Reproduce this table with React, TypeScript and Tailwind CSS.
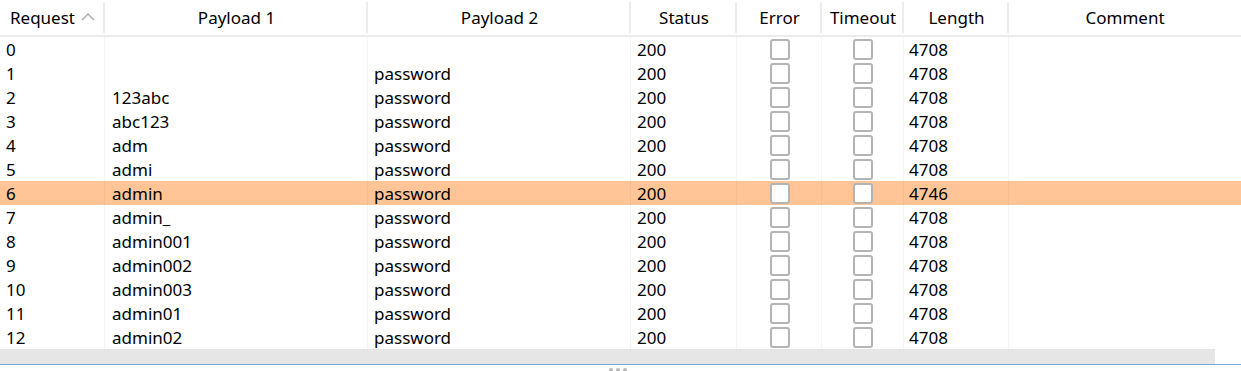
import React from "react";

type Row = { id: number; p1: string; p2: string; status: number; length: number };

const rows: Row[] = [
  { id: 0, p1: "", p2: "", status: 200, length: 4708 },
  { id: 1, p1: "", p2: "password", status: 200, length: 4708 },
  { id: 2, p1: "123abc", p2: "password", status: 200, length: 4708 },
  { id: 3, p1: "abc123", p2: "password", status: 200, length: 4708 },
  { id: 4, p1: "adm", p2: "password", status: 200, length: 4708 },
  { id: 5, p1: "admi", p2: "password", status: 200, length: 4708 },
  { id: 6, p1: "admin", p2: "password", status: 200, length: 4746 },
  { id: 7, p1: "admin_", p2: "password", status: 200, length: 4708 },
  { id: 8, p1: "admin001", p2: "password", status: 200, length: 4708 },
  { id: 9, p1: "admin002", p2: "password", status: 200, length: 4708 },
  { id: 10, p1: "admin003", p2: "password", status: 200, length: 4708 },
  { id: 11, p1: "admin01", p2: "password", status: 200, length: 4708 },
  { id: 12, p1: "admin02", p2: "password", status: 200, length: 4708 },
];

const cols = "grid grid-cols-[105px_263px_263px_106px_85px_82px_105px_1fr]";

const Check = () => (
  <div className="w-[20px] h-[21px] rounded-[3px] border-2 border-[#b4b4b4] bg-white" />
);

const HeaderCell = ({ label, last }: { label: string; last?: boolean }) => (
  <div className="relative flex items-center justify-center">
    {label}
    {!last && <span className="absolute right-0 top-[2px] h-[31px] w-[2px] bg-[#ececec]" />}
  </div>
);

const App = () => {
  return (
    <div
      className="w-[1241px] h-[371px] bg-white text-[17px] text-black overflow-hidden"
      style={{ fontFamily: '"Noto Sans", "Open Sans", sans-serif' }}
    >
      <div className={`${cols} h-[37px] border-b-2 border-[#ececec]`}>
        <div className="relative flex items-center pl-[10px]">
          Request
          <svg className="ml-[6px] mt-[-2px]" width="14" height="9" viewBox="0 0 14 9">
            <path d="M1 8 L7 2 L13 8" fill="none" stroke="#a8a8a8" strokeWidth="1.4" />
          </svg>
          <span className="absolute right-0 top-[2px] h-[31px] w-[2px] bg-[#ececec]" />
        </div>
        <HeaderCell label="Payload 1" />
        <HeaderCell label="Payload 2" />
        <HeaderCell label="Status" />
        <HeaderCell label="Error" />
        <HeaderCell label="Timeout" />
        <HeaderCell label="Length" />
        <HeaderCell label="Comment" last />
      </div>

      {rows.map((r) => (
        <div
          key={r.id}
          className={`${cols} h-[24px] leading-[24px] ${r.id === 6 ? "bg-[#ffc596]" : ""}`}
        >
          <div className="pl-[6px] pt-[1px] border-r border-black/[0.035]">{r.id}</div>
          <div className="pl-[7px] pt-[1px] border-r border-black/[0.035]">{r.p1}</div>
          <div className="pl-[6px] pt-[1px] border-r border-black/[0.035]">{r.p2}</div>
          <div className="pl-[6px] pt-[1px] border-r border-black/[0.035]">{r.status}</div>
          <div className="flex items-center justify-center pl-[2px] border-r border-black/[0.035]">
            <Check />
          </div>
          <div className="flex items-center justify-center pl-[1px] border-r border-black/[0.035]">
            <Check />
          </div>
          <div className="pl-[5px] pt-[1px] border-r border-black/[0.035]">{r.length}</div>
          <div />
        </div>
      ))}

      {/* horizontal scrollbar track */}
      <div className="w-[1215px] h-[15px] bg-[#e6e6e6]" />
      <div className="h-[1px] bg-[#7aa7df]" />

      {/* split pane grip */}
      <div className="flex justify-center gap-[3px] pt-[3px] pr-[6px]">
        <span className="w-[4px] h-[4px] rounded-full bg-[#b8b8b8]" />
        <span className="w-[4px] h-[4px] rounded-full bg-[#b8b8b8]" />
        <span className="w-[4px] h-[4px] rounded-full bg-[#b8b8b8]" />
      </div>
    </div>
  );
};

export default App;
